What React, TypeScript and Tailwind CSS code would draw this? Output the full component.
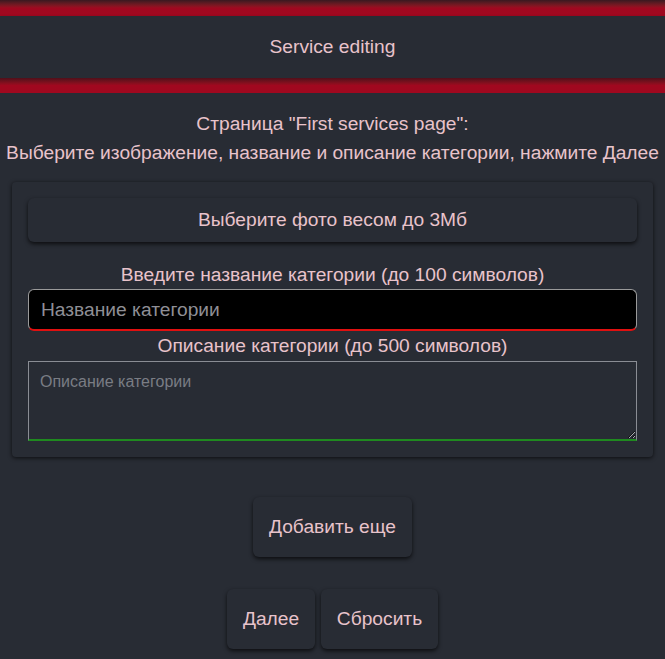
import React from 'react';

const font = { fontFamily: '"Liberation Sans", Arial, sans-serif' };

export default function App() {
  return (
    <div className="min-h-[659px] bg-[#282c34] text-[#e8c3cb]" style={font}>
      {/* Top bar */}
      <div className="h-[16px] bg-gradient-to-b from-[#3a1820] via-[#a00820] to-[#a0081f]" />
      <header className="flex h-[62px] items-center justify-center bg-[#282c34] text-[19.2px] shadow-[0_2px_3px_rgba(0,0,0,0.8)]">
        Service editing
      </header>
      <div className="h-[15px] bg-gradient-to-b from-[#50101a] via-[#a0081f] to-[#a0081f]" />

      <main className="flex flex-col items-center px-[12px]">
        <h2 className="mt-[20px] text-[19.2px] leading-[22px]">Страница "First services page":</h2>
        <p className="mt-[7px] whitespace-nowrap text-[19.2px] leading-[22px]">
          Выберите изображение, название и описание категории, нажмите Далее
        </p>

        <section className="mt-[18px] flex w-full flex-col items-center rounded-[4px] bg-[#282c34] px-[16px] pb-[16px] pt-[16px] shadow-[0_1px_4px_rgba(0,0,0,0.7)]">
          <button className="h-[44px] w-full rounded-[6px] bg-[#282c34] text-[19.2px] text-[#e8c3cb] shadow-[0_2px_4px_rgba(0,0,0,0.7)]">
            Выберите фото весом до 3Мб
          </button>

          <label className="mt-[22px] text-[19.2px] leading-[22px]">Введите название категории (до 100 символов)</label>
          <input
            placeholder="Название категории"
            className="mt-[3px] h-[42px] w-full rounded-[6px] border border-[#9a9a9a] border-b-2 border-b-[#e01010] bg-black px-[12px] text-[19.2px] text-[#e8c3cb] outline-none placeholder:text-[#8f8f96]"
          />

          <label className="mt-[4px] text-[19.2px] leading-[22px]">Описание категории (до 500 символов)</label>
          <textarea
            placeholder="Описание категории"
            className="mt-[4px] h-[80px] w-full border border-[#8a8d94] border-b-2 border-b-[#1f8a1f] bg-transparent px-[11px] py-[10px] text-[16px] leading-[20px] outline-none placeholder:text-[#7a7d84]"
          />
        </section>

        <button className="mt-[40px] h-[60px] w-[159px] rounded-[6px] bg-[#282c34] text-[19.2px] text-[#e8c3cb] shadow-[0_2px_4px_rgba(0,0,0,0.7)]">
          Добавить еще
        </button>

        <div className="mt-[32px] flex gap-[6px]">
          <button className="h-[60px] w-[88px] rounded-[6px] bg-[#282c34] text-[19.2px] text-[#e8c3cb] shadow-[0_2px_4px_rgba(0,0,0,0.7)]">
            Далее
          </button>
          <button className="h-[60px] w-[117px] rounded-[6px] bg-[#282c34] text-[19.2px] text-[#e8c3cb] shadow-[0_2px_4px_rgba(0,0,0,0.7)]">
            Сбросить
          </button>
        </div>
      </main>
    </div>
  );
}
